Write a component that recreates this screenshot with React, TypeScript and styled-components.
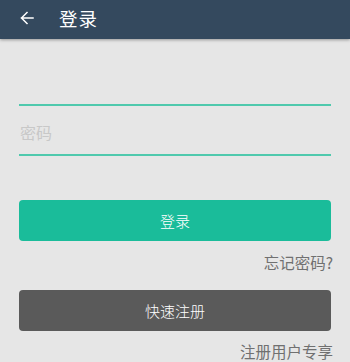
import React from 'react';
import styled, { createGlobalStyle } from 'styled-components';

const GlobalStyle = createGlobalStyle`
  html, body {
    margin: 0;
    padding: 0;
    background: #e6e6e6;
    font-family: "Noto Sans CJK SC", "Noto Sans", sans-serif;
  }
`;

const Page = styled.div`
  width: 350px;
  min-height: 362px;
  background: #e6e6e6;
  overflow: hidden;
`;

const TopBar = styled.header`
  height: 39px;
  background: #34495e;
  box-shadow: 0 1px 3px rgba(0, 0, 0, 0.35);
  display: flex;
  align-items: center;
  padding: 0 0 4px 19px;
  box-sizing: border-box;
  color: #fff;
`;

const BackButton = styled.button`
  border: 0;
  background: none;
  padding: 0;
  width: 16px;
  height: 16px;
  display: flex;
  color: #fff;
  cursor: pointer;
`;

const BarTitle = styled.h1`
  margin: 0 0 0 24px;
  font-size: 18.5px;
  font-weight: 400;
  letter-spacing: 1px;
`;

const Form = styled.form`
  display: flex;
  flex-direction: column;
  padding: 17px 19px 0;
`;

const Field = styled.input`
  height: 50px;
  border: 0;
  border-bottom: 2px solid #4fc9ad;
  background: transparent;
  padding: 4px 1px 0;
  font-family: inherit;
  font-size: 16px;
  color: #333;
  outline: none;
  box-sizing: border-box;

  &::placeholder {
    color: #c8c8c8;
  }
`;

const ActionButton = styled.button<{ $tone: 'primary' | 'dark' }>`
  height: 41px;
  border: 0;
  border-radius: 4px;
  background: ${p => (p.$tone === 'primary' ? '#1abc9a' : '#5a5a5a')};
  color: #fff;
  font-family: inherit;
  font-size: 15px;
  font-weight: 300;
  cursor: pointer;
`;

const LinkText = styled.span`
  align-self: flex-end;
  margin-right: -2px;
  font-size: 15.5px;
  line-height: 19px;
  color: #707070;
`;

const Spacer = styled.div<{ $h: number }>`
  height: ${p => p.$h}px;
`;

const ArrowIcon = () => (
  <svg width="16" height="16" viewBox="0 0 16 16" fill="none" stroke="currentColor" strokeWidth="1.5" strokeLinecap="square">
    <path d="M14 8H2.5M8 2.5L2.5 8L8 13.5" />
  </svg>
);

export default function App() {
  return (
    <Page>
      <GlobalStyle />
      <TopBar>
        <BackButton aria-label="返回">
          <ArrowIcon />
        </BackButton>
        <BarTitle>登录</BarTitle>
      </TopBar>
      <Form onSubmit={e => e.preventDefault()}>
        <Field type="text" />
        <Field type="password" placeholder="密码" />
        <Spacer $h={44} />
        <ActionButton $tone="primary">登录</ActionButton>
        <Spacer $h={12} />
        <LinkText>忘记密码?</LinkText>
        <Spacer $h={18} />
        <ActionButton $tone="dark" type="button">快速注册</ActionButton>
        <Spacer $h={11} />
        <LinkText>注册用户专享</LinkText>
      </Form>
    </Page>
  );
}
